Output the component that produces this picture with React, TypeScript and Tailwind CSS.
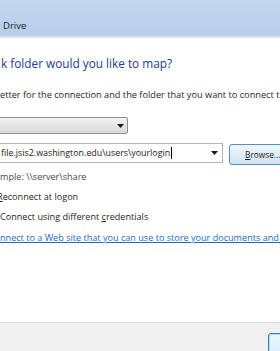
import React from 'react'

function Arrow() {
  return (
    <svg width="7" height="4" viewBox="0 0 7 4" className="shrink-0">
      <path d="M0 0h7L3.5 4z" fill="#1a1a1a" />
    </svg>
  )
}

export default function App() {
  return (
    <div className="flex h-[351px] w-[280px] flex-col overflow-hidden bg-white text-[#1f1f1f] font-['Open_Sans',Arial,sans-serif]">
      {/* title bar */}
      <div className="h-[38px] shrink-0 border-b-2 border-[#d9e6f4] bg-gradient-to-b from-[#c4d8ef] to-[#b7cee9] pl-[3px] pt-[20px]">
        <span className="block whitespace-nowrap text-[9.5px] leading-[12px] text-[#1e1e1e]">Drive</span>
      </div>

      {/* body */}
      <div className="flex flex-1 flex-col">
        <h1 className="mt-[17px] whitespace-nowrap pl-[1px] text-[11.8px] leading-[16px] font-normal text-[#1e3a8c]">
          k folder would you like to map?
        </h1>
        <p className="mt-[18px] whitespace-nowrap text-[9.2px] leading-[12px]">
          etter for the connection and the folder that you want to connect to:
        </p>

        {/* drive dropdown */}
        <div className="mt-[16px] -ml-[2px] flex h-[17px] w-[130px] items-center justify-end rounded-[2px] border border-[#8e8f8f] bg-gradient-to-b from-[#f2f2f2] to-[#d9d9d9] pr-[3px]">
          <Arrow />
        </div>

        {/* folder row */}
        <div className="mt-[9px] flex items-start">
          <div className="-ml-[2px] flex h-[20px] w-[225px] shrink-0 items-center border border-[#a9b7c9] bg-white pr-[4px]">
            <span className="whitespace-nowrap pl-[2px] text-[8.9px] leading-[12px] text-[#1a1a1a]">
              file.jsis2.washington.edu\users\yourlogin
            </span>
            <span className="ml-[1px] h-[12px] w-[1px] bg-black" />
            <span className="flex-1" />
            <Arrow />
          </div>
          <button className="ml-[6px] mt-[1px] flex h-[21px] w-[70px] shrink-0 items-center whitespace-nowrap rounded-[3px] border border-[#5b8db8] bg-gradient-to-b from-[#eef6fc] to-[#cfe4f5] pl-[15px] text-[8.3px] leading-[12px] text-[#1a1a1a]">
            <span className="underline">B</span>rowse...
          </button>
        </div>

        <p className="mt-[6px] whitespace-nowrap text-[9.1px] leading-[12px] text-[#4a4a4a]">
          mple: \\server\share
        </p>
        <p className="mt-[8px] -ml-[3px] whitespace-nowrap text-[9.1px] leading-[12px]">
          <span className="underline">R</span>econnect at logon
        </p>
        <p className="mt-[8px] whitespace-nowrap text-[9.1px] leading-[12px]">
          Connect using different <span className="underline">c</span>redentials
        </p>
        <a className="mt-[9px] block whitespace-nowrap text-[9.1px] leading-[12px] text-[#1a6bc4] underline">
          nnect to a Web site that you can use to store your documents and pictures
        </a>
      </div>

      {/* footer */}
      <div className="h-[29px] shrink-0 border-t border-[#dcdcdc] bg-[#f0f0f0] pl-[268px] pt-[10px]">
        <div className="h-[24px] w-[70px] rounded-[3px] border border-[#3c7fb1] bg-gradient-to-b from-[#eaf6fd] to-[#d7effc] shadow-[inset_0_0_0_1px_#a8dbf5]" />
      </div>
    </div>
  )
}
